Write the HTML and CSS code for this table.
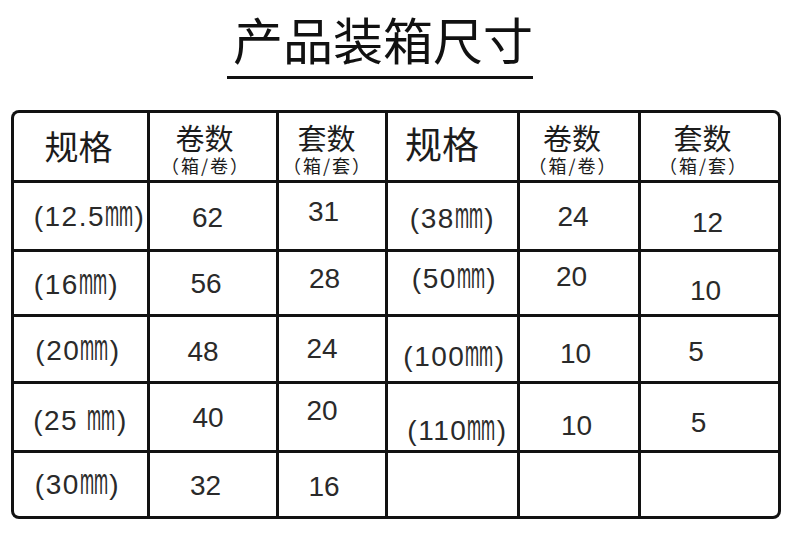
FILE: index.html
```html
<!DOCTYPE html>
<html lang="zh-CN">
<head>
<meta charset="utf-8">
<title>产品装箱尺寸</title>
<link rel="stylesheet" href="styles.css">
</head>
<body>
<div class="page">
  <header class="title-row">
    <h1 class="title">产品装箱尺寸</h1>
  </header>
  <div class="sheet">
    <div class="cell head h0"><span class="spec-h">规格</span></div>
    <div class="cell head h1"><span class="main-h">卷数</span><span class="sub-h">（箱/卷）</span></div>
    <div class="cell head h2"><span class="main-h">套数</span><span class="sub-h">（箱/套）</span></div>
    <div class="cell head h3"><span class="spec-h big">规格</span></div>
    <div class="cell head h4"><span class="main-h">卷数</span><span class="sub-h">（箱/卷）</span></div>
    <div class="cell head h5"><span class="main-h">套数</span><span class="sub-h">（箱/套）</span></div>

    <div class="cell r1c0"><span class="spec">(12.5<span class="mm">mm</span>)</span></div>
    <div class="cell r1c1"><span class="num">62</span></div>
    <div class="cell r1c2"><span class="num">31</span></div>
    <div class="cell r1c3"><span class="spec">(38<span class="mm">mm</span>)</span></div>
    <div class="cell r1c4"><span class="num">24</span></div>
    <div class="cell r1c5"><span class="num">12</span></div>

    <div class="cell r2c0"><span class="spec">(16<span class="mm">mm</span>)</span></div>
    <div class="cell r2c1"><span class="num">56</span></div>
    <div class="cell r2c2"><span class="num">28</span></div>
    <div class="cell r2c3"><span class="spec">(50<span class="mm">mm</span>)</span></div>
    <div class="cell r2c4"><span class="num">20</span></div>
    <div class="cell r2c5"><span class="num">10</span></div>

    <div class="cell r3c0"><span class="spec">(20<span class="mm">mm</span>)</span></div>
    <div class="cell r3c1"><span class="num">48</span></div>
    <div class="cell r3c2"><span class="num">24</span></div>
    <div class="cell r3c3"><span class="spec">(100<span class="mm">mm</span>)</span></div>
    <div class="cell r3c4"><span class="num">10</span></div>
    <div class="cell r3c5"><span class="num">5</span></div>

    <div class="cell r4c0"><span class="spec">(25 <span class="mm">mm</span>)</span></div>
    <div class="cell r4c1"><span class="num">40</span></div>
    <div class="cell r4c2"><span class="num">20</span></div>
    <div class="cell r4c3"><span class="spec">(110<span class="mm">mm</span>)</span></div>
    <div class="cell r4c4"><span class="num">10</span></div>
    <div class="cell r4c5"><span class="num">5</span></div>

    <div class="cell r5c0 corner-bl"><span class="spec">(30<span class="mm">mm</span>)</span></div>
    <div class="cell r5c1"><span class="num">32</span></div>
    <div class="cell r5c2"><span class="num">16</span></div>
    <div class="cell r5c3"></div>
    <div class="cell r5c4"></div>
    <div class="cell r5c5 corner-br"></div>
  </div>
</div>
</body>
</html>
```
FILE: styles.css
```css
html, body {
  margin: 0;
  padding: 0;
  background: #ffffff;
}

body {
  font-family: "Liberation Sans", "Noto Sans CJK SC", sans-serif;
  color: #2a2a2a;
  width: 790px;
  height: 557px;
  overflow: hidden;
}

.page {
  display: flex;
  flex-direction: column;
}

.title-row {
  display: flex;
  padding-left: 227px;
  padding-top: 13px;
}

.title {
  margin: 0;
  width: 306px;
  box-sizing: border-box;
  padding-left: 6px;
  padding-bottom: 13px;
  border-bottom: 3px solid #111;
  font-family: "Noto Sans CJK SC", sans-serif;
  font-weight: 400;
  font-size: 50px;
  line-height: 50px;
  color: #111;
  white-space: nowrap;
}

.sheet {
  margin-top: 31px;
  margin-left: 11px;
  width: max-content;
  display: grid;
  grid-template-columns: 133px 126px 106px 129px 118px 137px;
  grid-template-rows: 67px 66px 62px 64px 66px 63px;
  gap: 3px;
  padding: 3px;
  background: #121212;
  border-radius: 8px;
}

.cell {
  background: #fff;
  display: flex;
  align-items: center;
  justify-content: center;
  box-sizing: border-box;
  white-space: nowrap;
}

.h0 { border-top-left-radius: 5px; }
.h5 { border-top-right-radius: 5px; }
.corner-bl { border-bottom-left-radius: 5px; }
.corner-br { border-bottom-right-radius: 5px; }

.head {
  flex-direction: column;
  font-family: "Noto Sans CJK SC", sans-serif;
  color: #1c1c1c;
}

.spec-h {
  font-size: 34px;
  line-height: 1;
}

.spec-h.big {
  font-size: 37px;
}

.main-h {
  font-size: 29px;
  line-height: 32px;
}

.sub-h {
  margin-top: 2px;
  font-size: 18px;
  line-height: 20px;
  letter-spacing: 2px;
  margin-right: -2px;
}

.num {
  font-size: 28px;
  line-height: 1;
}

.spec {
  font-size: 28px;
  line-height: 1;
  letter-spacing: 1.5px;
}

.mm {
  display: inline-block;
  font-size: 36px;
  line-height: 20px;
  letter-spacing: 0;
  transform: scaleX(0.47);
  margin: 0 -14.5px 0 -16px;
}

/* header placement */
.h0 { padding-right: 4px; padding-bottom: 2px; }
.h1 { padding-right: 17px; padding-top: 2px; }
.h2 { padding-right: 11px; padding-top: 2px; }
.h3 { padding-right: 21px; padding-bottom: 6px; }
.h4 { padding-right: 14px; padding-top: 2px; }
.h5 { padding-right: 14px; padding-top: 2px; }

/* row 1 */
.r1c0 { padding-left: 18px; padding-top: 1px; }
.r1c1 { padding-right: 11px; padding-top: 3px; }
.r1c2 { padding-right: 17px; padding-bottom: 9px; }
.r1c3 { padding-top: 5px; }
.r1c4 { padding-right: 12px; padding-top: 2px; }
.r1c5 { padding-right: 4px; padding-top: 14px; }

/* row 2 */
.r2c0 { padding-right: 8px; padding-top: 3px; }
.r2c1 { padding-right: 14px; padding-top: 2px; }
.r2c2 { padding-right: 15px; padding-bottom: 8px; }
.r2c3 { padding-left: 4px; padding-bottom: 9px; }
.r2c4 { padding-right: 15px; padding-bottom: 12px; }
.r2c5 { padding-right: 8px; padding-top: 15px; }

/* row 3 */
.r3c0 { padding-right: 5px; padding-top: 3px; }
.r3c1 { padding-right: 20px; padding-top: 5px; }
.r3c2 { padding-right: 20px; }
.r3c3 { padding-left: 4px; padding-top: 15px; }
.r3c4 { padding-right: 7px; padding-top: 10px; }
.r3c5 { padding-right: 27px; padding-top: 6px; }

/* row 4 */
.r4c0 { padding-top: 7px; }
.r4c1 { padding-right: 10px; padding-top: 2px; }
.r4c2 { padding-right: 20px; padding-bottom: 13px; }
.r4c3 { padding-left: 10px; padding-top: 27px; }
.r4c4 { padding-right: 5px; padding-top: 18px; }
.r4c5 { padding-right: 22px; padding-top: 11px; }

/* row 5 */
.r5c0 { padding-right: 6px; }
.r5c1 { padding-right: 15px; padding-top: 3px; }
.r5c2 { padding-right: 16px; padding-top: 4px; }
```
